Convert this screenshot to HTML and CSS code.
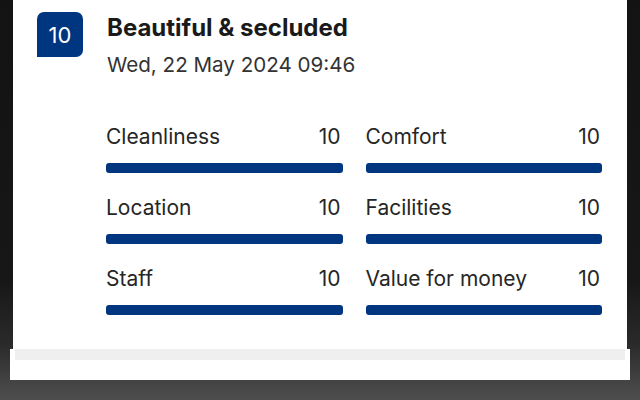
FILE: index.html
```html
<!DOCTYPE html>
<html lang="en">
<head>
    <meta charset="UTF-8">
    <meta name="viewport" content="width=device-width, initial-scale=1.0">
    <title>Review</title>
    <link rel="stylesheet" href="styles.css">
</head>
<body>

    <div class="sheet">
        <div class="review-head">
            <div class="score-badge">10</div>
            <div class="review-meta">
                <div class="review-title">Beautiful &amp; secluded</div>
                <div class="review-date">Wed, 22 May 2024 09:46</div>
            </div>
        </div>

        <div class="ratings">
            <div class="rating">
                <div class="rating-line"><span>Cleanliness</span><span>10</span></div>
                <div class="bar"><div class="bar-fill" style="width: 100%"></div></div>
            </div>
            <div class="rating">
                <div class="rating-line"><span>Comfort</span><span>10</span></div>
                <div class="bar"><div class="bar-fill" style="width: 100%"></div></div>
            </div>
            <div class="rating">
                <div class="rating-line"><span>Location</span><span>10</span></div>
                <div class="bar"><div class="bar-fill" style="width: 100%"></div></div>
            </div>
            <div class="rating">
                <div class="rating-line"><span>Facilities</span><span>10</span></div>
                <div class="bar"><div class="bar-fill" style="width: 100%"></div></div>
            </div>
            <div class="rating">
                <div class="rating-line"><span>Staff</span><span>10</span></div>
                <div class="bar"><div class="bar-fill" style="width: 100%"></div></div>
            </div>
            <div class="rating">
                <div class="rating-line"><span>Value for money</span><span>10</span></div>
                <div class="bar"><div class="bar-fill" style="width: 100%"></div></div>
            </div>
        </div>
    </div>

    <!-- alttaki gri ayırıcı şerit -->
    <div class="sheet-foot">
        <div class="divider"></div>
    </div>

</body>
</html>
```

FILE: styles.css
```css
/* Sayfa genel */
body {
    margin: 0;
    height: 400px;
    overflow: hidden;
    font-family: Inter, "Liberation Sans", sans-serif;
    background: linear-gradient(180deg, #131313 0%, #171717 70%, #2a2a2a 86%, #424242 95%, #4e4e4e 100%);
}

/* Beyaz kart */
.sheet {
    margin: 0 13px;
    background-color: #fff;
    height: 349px;
}

/* Üst kısım: puan ve başlık */
.review-head {
    display: flex;
    gap: 24px;
    padding: 12px 0 0 24px;
}

.score-badge {
    width: 46px;
    height: 45px;
    background-color: #003580;
    color: #fff;
    border-radius: 7px 7px 7px 0;
    font-size: 22px;
    display: flex;
    align-items: center;
    justify-content: center;
}

.review-title {
    font-size: 24px;
    font-weight: 700;
    color: #1a1a1a;
    line-height: 28px;
    margin-top: 2px;
}

.review-date {
    font-size: 20.6px;
    color: #333;
    line-height: 28px;
    margin-top: 9px;
}

/* Puan çubukları */
.ratings {
    display: grid;
    grid-template-columns: 1fr 1fr;
    column-gap: 23px;
    row-gap: 23px;
    padding: 46px 25px 0 93px;
}

.rating-line {
    display: flex;
    justify-content: space-between;
    font-size: 21px;
    color: #262626;
    line-height: 24px;
    padding-right: 2px;
}

.bar {
    margin-top: 14px;
    height: 10px;
    border-radius: 3px;
    background-color: #e6e6e6;
    overflow: hidden;
}

.bar-fill {
    height: 100%;
    background-color: #003580;
}

/* Alt şerit */
.sheet-foot {
    margin: 0 10px;
    height: 31px;
    background-color: #fff;
    padding: 0 5px;
}

.divider {
    height: 11px;
    background-color: #efefef;
}
```
